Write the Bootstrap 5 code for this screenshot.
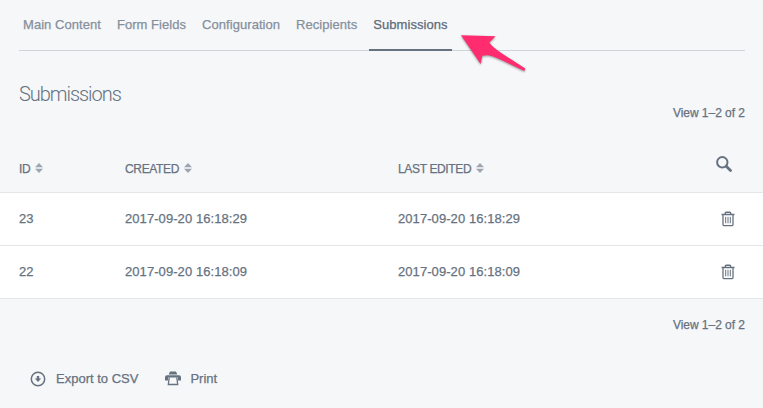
<!DOCTYPE html>
<html lang="en">
<head>
<meta charset="utf-8">
<meta name="viewport" content="width=device-width, initial-scale=1">
<title>Submissions</title>
<link href="https://cdn.jsdelivr.net/npm/bootstrap@5.3.0/dist/css/bootstrap.min.css" rel="stylesheet">
<style>
body{background:#f6f7f9;color:#66727f;font:13px/20px "Liberation Sans",Arial,sans-serif;height:408px;overflow:hidden;-webkit-text-stroke:.25px currentColor}
.cms-tabs{margin:0 18px 0 19px;height:51px;border-bottom:1px solid #ced5da}
.cms-tabs .nav-link{color:#858f9c;padding:15px 4px 0;height:51px;margin-right:8px;letter-spacing:.05px}
.cms-tabs .nav-link.active{color:#5d6a78;border-bottom:2px solid #66727f}
.page-title{font-family:Roboto,"Liberation Sans",sans-serif;font-weight:300;font-size:20px;line-height:24px;margin:31px 0 0 19px;letter-spacing:-1.05px;-webkit-text-stroke:0}
.pager{font-size:12px;padding-right:18px;letter-spacing:-.03px}
.pager-top{margin-top:-3px}
.pager-bottom{margin-top:16px}
.grid-table{table-layout:fixed;margin-top:19px;--bs-table-bg:transparent;--bs-table-color:#66727f;border-color:#e4e7ea}
.grid-table th,.grid-table td{padding:0;height:53px;letter-spacing:.07px}
.grid-table thead th{height:50px;font-weight:400;font-size:12px;letter-spacing:-.35px;vertical-align:bottom;padding-bottom:13px}
.grid-table thead .find{padding-bottom:20px}
.grid-table tbody{background:#fff}
.c-id{width:125px}.c-created{width:273px}.c-act{width:47px}
.grid-table th:first-child,.grid-table td:first-child{padding-left:19px}
.sort{margin-left:5px;vertical-align:0}
.bin{margin-left:5px}
.tools{margin:34px 0 0 30px}
.tools .gap-export{margin-left:10px}
.tools .gap-print{margin-left:9px}
.tools .print{margin-left:27px}
.arrow-mark{left:455px;top:29px}
</style>
</head>
<body>
<nav class="nav cms-tabs flex-nowrap">
<a class="nav-link" href="#">Main Content</a>
<a class="nav-link" href="#">Form Fields</a>
<a class="nav-link" href="#">Configuration</a>
<a class="nav-link" href="#">Recipients</a>
<a class="nav-link active" href="#">Submissions</a>
</nav>
<svg class="arrow-mark position-absolute" width="80" height="50" viewBox="455 29 80 50"><path d="M461 35.3L495.500 36.2L489.300 42.600Q492 47 502 53.500L525.300 68.400L524.300 71L503 60.800Q492 55.500 488 55.300Q485 55 482.300 55.800L480.600 64Z" fill="#ff2d70" style="filter:drop-shadow(0 1px 1px #0006)"/></svg>
<h1 class="page-title">Submissions</h1>
<div class="pager pager-top text-end">View 1–2 of 2</div>
<table class="table grid-table mb-0 align-middle">
<colgroup><col class="c-id"><col class="c-created"><col><col class="c-act"></colgroup>
<thead><tr>
<th>ID<svg class="sort" width="8" height="10" viewBox="0 0 8 10" fill="#9da5ae"><path d="M0 4.300L4 0L8 4.300zM0 5.700H8L4 10z"/></svg></th>
<th>CREATED<svg class="sort" width="8" height="10" viewBox="0 0 8 10" fill="#9da5ae"><path d="M0 4.300L4 0L8 4.300zM0 5.700H8L4 10z"/></svg></th>
<th>LAST EDITED<svg class="sort" width="8" height="10" viewBox="0 0 8 10" fill="#9da5ae"><path d="M0 4.300L4 0L8 4.300zM0 5.700H8L4 10z"/></svg></th>
<th class="find"><svg class="d-block" width="16" height="16" viewBox="0 0 16 16" fill="none" stroke="#66727f"><circle cx="6.300" cy="6.300" r="5.200" stroke-width="2"/><path d="M10.500 10.500L14.500 14.500" stroke-width="2.800" stroke-linecap="round"/></svg></th>
</tr></thead>
<tbody>
<tr><td>23</td><td>2017-09-20 16:18:29</td><td>2017-09-20 16:18:29</td><td><svg class="d-block bin" width="14" height="16" viewBox="0 0 14 16" fill="none" stroke="#66727f"><path d="M.500 3.500H13.500M2 4V13.500Q2 14.700 3.300 14.700H10.700Q12 14.700 12 13.500V4" stroke-width="1.300"/><path d="M4.300 3V2.200Q4.300 1.300 5.200 1.300H8.800Q9.700 1.300 9.700 2.200V3" stroke-width="1.400"/><path d="M4.700 5.800V12.300M7 5.800V12.300M9.300 5.800V12.300"/></svg></td></tr>
<tr><td>22</td><td>2017-09-20 16:18:09</td><td>2017-09-20 16:18:09</td><td><svg class="d-block bin" width="14" height="16" viewBox="0 0 14 16" fill="none" stroke="#66727f"><path d="M.500 3.500H13.500M2 4V13.500Q2 14.700 3.300 14.700H10.700Q12 14.700 12 13.500V4" stroke-width="1.300"/><path d="M4.300 3V2.200Q4.300 1.300 5.200 1.300H8.800Q9.700 1.300 9.700 2.200V3" stroke-width="1.400"/><path d="M4.700 5.800V12.300M7 5.800V12.300M9.300 5.800V12.300"/></svg></td></tr>
</tbody>
</table>
<div class="pager pager-bottom text-end">View 1–2 of 2</div>
<div class="tools d-flex align-items-center">
<a class="d-flex align-items-center text-reset text-decoration-none" href="#"><svg width="16" height="16" viewBox="0 0 16 16" fill="none" stroke="#66727f"><circle cx="8" cy="8" r="6.700" stroke-width="1.500"/><path d="M6.800 5H9.200V7.500H11.200L8 11L4.800 7.500H6.800Z" fill="#66727f" stroke="none"/></svg><span class="gap-export">Export to CSV</span></a>
<a class="d-flex align-items-center text-reset text-decoration-none print" href="#"><svg width="16" height="15" viewBox="0 0 16 15" fill="#66727f"><path d="M5 .500H11L12.300 3.500H3.700zM2 4.300H14Q16 4.300 16 6.300V9.500H13V6.500H3V9.500H0V6.300Q0 4.300 2 4.300z"/><path d="M4.200 6.500L3.300 13.500H12.700L11.800 6.500" fill="none" stroke="#66727f" stroke-width="1.300"/></svg><span class="gap-print">Print</span></a>
</div>
<script src="https://cdn.jsdelivr.net/npm/bootstrap@5.3.0/dist/js/bootstrap.bundle.min.js"></script>
</body>
</html>
